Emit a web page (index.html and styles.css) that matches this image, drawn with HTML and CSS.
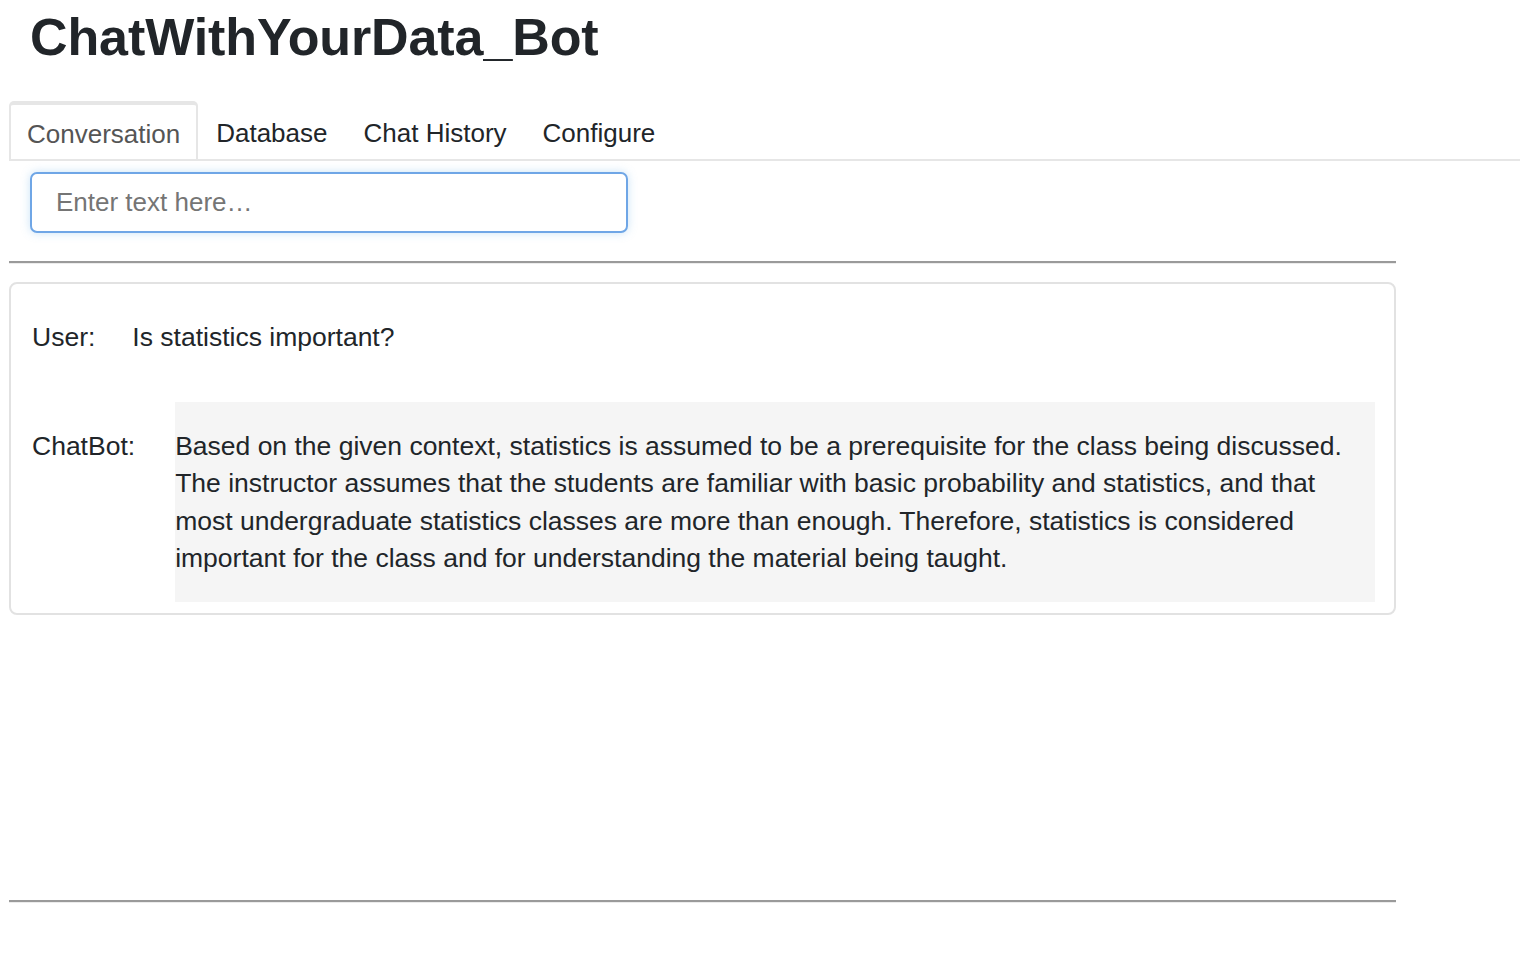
FILE: index.html
```html
<!DOCTYPE html>
<html>
<head>
<meta charset="utf-8">
<title>ChatWithYourData_Bot</title>
<link rel="stylesheet" href="styles.css">
</head>
<body>
<h1 class="title">ChatWithYourData_Bot</h1>
<div class="tabs">
  <div class="tab active">Conversation</div>
  <div class="tab">Database</div>
  <div class="tab">Chat History</div>
  <div class="tab">Configure</div>
</div>
<div class="pane">
  <div class="input-wrap">
    <input class="text-input" type="text" placeholder="Enter text here…">
  </div>
  <div class="rule"></div>
  <div class="card">
    <div class="row user-row">
      <div class="label">User:</div>
      <div class="msg">Is statistics important?</div>
    </div>
    <div class="row bot-row">
      <div class="label">ChatBot:</div>
      <div class="msg bot-msg">Based on the given context, statistics is assumed to be a prerequisite for the class being discussed. The instructor assumes that the students are familiar with basic probability and statistics, and that most undergraduate statistics classes are more than enough. Therefore, statistics is considered important for the class and for understanding the material being taught.</div>
    </div>
  </div>
  <div class="spacer"></div>
  <div class="rule"></div>
</div>
</body>
</html>
```

FILE: styles.css
```css
html, body {
  margin: 0;
  padding: 0;
  background: #ffffff;
}
body {
  font-family: "Liberation Sans", Arial, Helvetica, sans-serif;
  color: #212529;
  font-size: 26px;
}
.title {
  margin: 0;
  padding: 7px 0 0 30px;
  height: 92px;
  box-sizing: border-box;
  font-size: 52px;
  line-height: 60px;
  font-weight: 700;
  color: #212529;
  letter-spacing: -0.1px;
}
.tabs {
  display: flex;
  margin-left: 9px;
  margin-top: 9px;
  border-bottom: 2px solid #e6e6e6;
  height: 60px;
  box-sizing: border-box;
}
.tab {
  padding: 0 18px;
  display: flex;
  align-items: center;
  padding-top: 6px;
  box-sizing: border-box;
  height: 58px;
  color: #212529;
  font-size: 26px;
}
.tab.active {
  border: 2px solid #e6e6e6;
  border-top: 4px solid #e6e6e6;
  border-bottom: none;
  border-radius: 5px 5px 0 0;
  padding: 4px 16px 0 16px;
  color: #555555;
}
.pane {
  padding-left: 9px;
  width: 1387px;
}
.input-wrap {
  padding: 11px 0 0 21px;
}
.text-input {
  display: block;
  width: 598px;
  height: 61px;
  box-sizing: border-box;
  border: 2px solid #6fa6e6;
  border-radius: 7px;
  box-shadow: 0 0 10px rgba(102, 175, 233, 0.35);
  padding: 0 24px;
  font-family: "Liberation Sans", Arial, Helvetica, sans-serif;
  font-size: 26px;
  color: #212529;
  outline: none;
}
.text-input::placeholder {
  color: #757575;
}
.rule {
  margin-top: 28px;
  border-top: 2px solid #9a9a9a;
  border-bottom: 1px solid #ececec;
}
.card {
  margin-top: 18px;
  border: 2px solid #e2e2e2;
  border-radius: 8px;
  padding: 0 19px 10px 21px;
  height: 333px;
  box-sizing: border-box;
  font-size: 26.5px;
}
.row {
  display: flex;
  gap: 40px;
  line-height: 37.5px;
}
.user-row {
  margin-top: 35px;
  gap: 37px;
}
.bot-row {
  margin-top: 45px;
}
.label {
  flex: none;
}
.bot-row .label {
  padding-top: 26px;
}
.msg {
  flex: 1;
}
.bot-msg {
  background: #f5f5f5;
  padding: 26px 0 24px 0;
}
.spacer {
  height: 257px;
}
```
